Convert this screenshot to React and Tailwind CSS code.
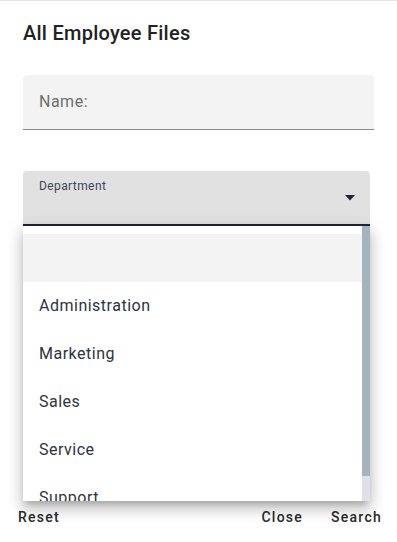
import { useState } from 'react';

const DEPARTMENTS = ['', 'Administration', 'Marketing', 'Sales', 'Service', 'Support'];

export default function App() {
  const [selected] = useState('');

  return (
    <div className="relative h-[542px] w-[397px] overflow-hidden border-t border-[#e6e6e6] bg-white font-['Roboto',sans-serif] text-[#262c36]">
      <h1 className="pl-[23px] pt-[20px] text-[20px] font-medium leading-[24px] tracking-[0.25px] text-[#222]">All Employee Files</h1>

      <div className="ml-[23px] mt-[30px] flex h-[55px] w-[351px] items-center rounded-t border-b border-[#8a8a8a] bg-[#f3f3f3] px-4">
        <span className="text-base tracking-[0.5px] text-[#6e6e6e]">Name:</span>
      </div>

      <div className="relative ml-[23px] mt-[41px] h-[55px] w-[347px] rounded-t border-b-2 border-[#1b2541] bg-[#e1e1e1] px-4 pt-[7px]">
        <span className="block text-xs leading-[16px] tracking-[0.4px] text-[#3c4658]">Department</span>
        <svg className="absolute right-[14px] top-[24px]" width="12" height="6" viewBox="0 0 12 6">
          <path d="M1 0h10L6 5.5z" fill="#1b2541" />
        </svg>
      </div>

      <div className="absolute left-[23px] top-[225px] z-10 flex h-[275px] w-[347px] bg-white shadow-[0_5px_6px_-3px_rgba(0,0,0,0.2),0_9px_12px_1px_rgba(0,0,0,0.14),0_3px_16px_2px_rgba(0,0,0,0.12)]">
        <ul className="flex-1 overflow-hidden pt-2">
          {DEPARTMENTS.map((d) => (
            <li
              key={d || 'none'}
              className={`flex h-12 items-center px-4 text-base tracking-[0.5px] text-[#2d3340] ${d === selected ? 'bg-[#f3f3f3]' : ''}`}
            >
              {d}
            </li>
          ))}
        </ul>
        <div className="flex w-[8px] flex-col bg-[#dfe1e7]">
          <div className="h-[250px] bg-[#a5b4bc]" />
        </div>
      </div>

      <div className="mt-[283px] flex items-center pl-[18px] pr-[15px] text-sm font-medium leading-[16px] tracking-[1.25px] text-[#2a2a2a]">
        <button className="mr-auto">Reset</button>
        <button className="mr-[28px]">Close</button>
        <button>Search</button>
      </div>
    </div>
  );
}
